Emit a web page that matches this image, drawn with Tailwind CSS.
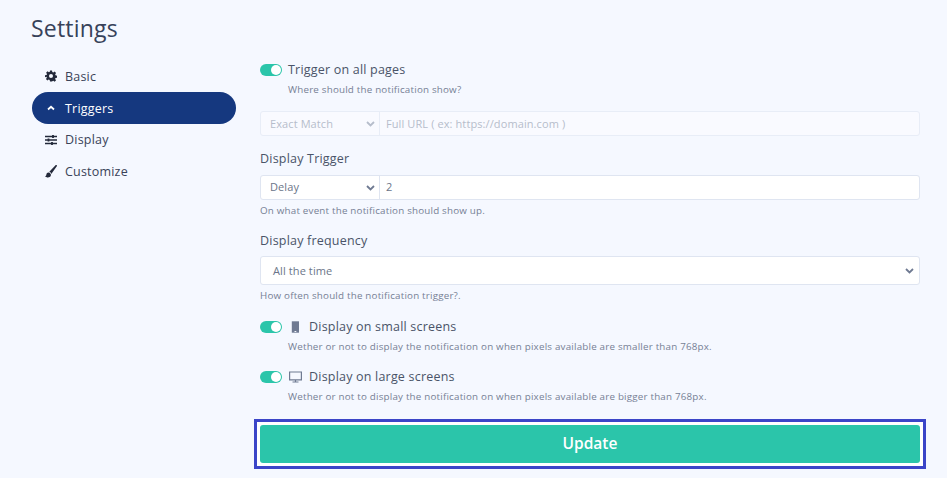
<!DOCTYPE html>
<html lang="en">
<head>
  <meta charset="UTF-8" />
  <title>Settings</title>
  <script src="https://cdn.jsdelivr.net/npm/@tailwindcss/browser@4"></script>
</head>
<body class="bg-[#f5f8ff] text-[#3a4358] font-['Open_Sans',sans-serif] h-[478px] w-[947px] overflow-hidden">
  <div class="pl-[31px] pt-[13px]">
    <h1 class="text-[23px] leading-[30px] font-normal text-[#37425a] tracking-[0.2px]">Settings</h1>
  </div>
  <div class="flex mt-[18px] pl-[32px]">
    <!-- sidebar -->
    <nav class="w-[204px] text-[12.500px] tracking-[0.2px] text-[#3a4358]">
      <a class="flex items-center h-[32px] pl-[13px] gap-[8px] mt-[-1px]">
        <svg class="w-[12px] h-[12px]" viewBox="0 0 24 24" fill="#23293a"><path fill-rule="evenodd" d="M10 1h4l.6 3.2 2 .8 2.7-1.8 2.8 2.8-1.8 2.7.8 2 3.1.6v4l-3.2.6-.8 2 1.900 2.700-2.800 2.800-2.700-1.800-2 .8L14 23h-4l-.6-3.2-2-.8-2.700 1.800-2.800-2.800 1.800-2.700-.8-2L0 14.700v-4l3.200-.6.8-2-1.800-2.700 2.800-2.800 2.700 1.800 2-.8zM12 8a4 4 0 1 0 0 8 4 4 0 0 0 0-8z"/></svg>
        <span class="pt-[2px]">Basic</span>
      </a>
      <a class="flex items-center h-[32px] pl-[15px] gap-[10px] rounded-full bg-[#15387f] text-white">
        <svg class="w-[8px] h-[6px]" viewBox="0 0 8 6" fill="none" stroke="#fff" stroke-width="1.800"><path d="M1 4.500 4 1.800 7 4.500"/></svg>
        <span class="pt-[2px]">Triggers</span>
      </a>
      <a class="flex items-center h-[32px] pl-[13px] gap-[8px]">
        <svg class="w-[12px] h-[12px]" viewBox="0 0 12 12" fill="none" stroke="#23293a" stroke-width="1.300"><path d="M0 2.500h12M0 6h12M0 9.500h12"/><path d="M8 1v3M3.500 4.500v3M7 8v3" stroke-width="1.800"/></svg>
        <span>Display</span>
      </a>
      <a class="flex items-center h-[31px] pl-[13px] gap-[8px]">
        <svg class="w-[12px] h-[13px]" viewBox="0 0 12 13" fill="#23293a"><path d="M11.800.3c-.5-.4-1.100-.3-1.500.1L4.300 6.800c1 .3 1.800 1.100 2 2.100l5.300-7.300c.4-.4.500-1 .2-1.300zM3.500 7.400C2.300 7.400 1.500 8.300 1.400 9.400 1.300 10.400.8 10.900 0 11.100c1.100 1.500 3.300 1.900 4.700 1 1.200-.8 1.500-2.100 1-3.200-.4-.9-1.200-1.500-2.200-1.500z"/></svg>
        <span class="pt-[2px]">Customize</span>
      </a>
    </nav>

    <!-- form -->
    <div class="ml-[24px] w-[660px] text-[12.500px] tracking-[0.2px]">
      <div class="flex items-center h-[20px] mt-[-1px]">
        <span class="relative w-[22px] h-[12px] rounded-full bg-[#2bc5aa] mr-[6px]"><span class="absolute right-[1px] top-[1px] w-[10px] h-[10px] rounded-full bg-white"></span></span>
        <span class="text-[#4a5468]">Trigger on all pages</span>
      </div>
      <p class="ml-[28px] mt-[3px] text-[9.800px] leading-[14px] text-[#757f95]">Where should the notification show?</p>

      <div class="flex h-[25px] mt-[14px] bg-[#f9faff] border border-[#e8edf7] rounded-[3px] text-[11px] tracking-[0.1px] text-[#b6bdcb]">
        <div class="w-[119px] flex items-center justify-between pl-[9px] pr-[4px] border-r border-[#e8edf7]">
          <span class="pt-[2px]">Exact Match</span>
          <svg class="w-[9px] h-[6px]" viewBox="0 0 9 6" fill="none" stroke="#b6bdcb" stroke-width="1.800"><path d="M1 1l3.500 3.500L8 1"/></svg>
        </div>
        <div class="flex items-center pl-[6px] pt-[2px]">Full URL ( ex: https://domain.com )</div>
      </div>

      <p class="mt-[14px] text-[12.500px] leading-[18px] text-[#4a5468]">Display Trigger</p>
      <div class="flex h-[25px] mt-[7px] bg-white border border-[#dfe5f1] rounded-[3px] text-[11px] tracking-[0.1px] text-[#6b7589]">
        <div class="w-[119px] flex items-center justify-between pl-[9px] pr-[4px] border-r border-[#dfe5f1]">
          <span>Delay</span>
          <svg class="w-[9px] h-[6px]" viewBox="0 0 9 6" fill="none" stroke="#6f7a92" stroke-width="1.800"><path d="M1 1l3.500 3.500L8 1"/></svg>
        </div>
        <div class="flex items-center pl-[6px]">2</div>
      </div>
      <p class="mt-[4px] text-[9.800px] leading-[14px] text-[#757f95]">On what event the notification should show up.</p>

      <p class="mt-[14px] text-[12.500px] leading-[18px] text-[#4a5468]">Display frequency</p>
      <div class="flex items-center justify-between h-[29px] mt-[6px] pl-[12px] pr-[5px] bg-white border border-[#dfe5f1] rounded-[3px] text-[11px] tracking-[0.1px] text-[#6b7589]">
        <span class="pt-[2px]">All the time</span>
        <svg class="w-[9px] h-[6px]" viewBox="0 0 9 6" fill="none" stroke="#6f7a92" stroke-width="1.800"><path d="M1 1l3.500 3.500L8 1"/></svg>
      </div>
      <p class="mt-[4px] text-[9.800px] leading-[14px] text-[#757f95]">How often should the notification trigger?.</p>

      <div class="flex items-center h-[20px] mt-[14px]">
        <span class="relative w-[22px] h-[12px] rounded-full bg-[#2bc5aa] mr-[7px]"><span class="absolute right-[1px] top-[1px] w-[10px] h-[10px] rounded-full bg-white"></span></span>
        <svg class="w-[13px] h-[12px] mr-[7px]" viewBox="0 0 13 12" fill="#6f7a92"><path d="M2.800.3h7.200v11.400H2.800z"/><path d="M5.500 10h1.800v1H5.500z" fill="#f5f8ff"/></svg>
        <span class="text-[12.500px] text-[#4a5468]">Display on small screens</span>
      </div>
      <p class="ml-[28px] mt-[3px] text-[9.800px] leading-[14px] text-[#757f95]">Wether or not to display the notification on when pixels available are smaller than 768px.</p>

      <div class="flex items-center h-[20px] mt-[13px]">
        <span class="relative w-[22px] h-[12px] rounded-full bg-[#2bc5aa] mr-[7px]"><span class="absolute right-[1px] top-[1px] w-[10px] h-[10px] rounded-full bg-white"></span></span>
        <svg class="w-[13px] h-[12px] mr-[7px]" viewBox="0 0 13 12" fill="none" stroke="#6f7a92" stroke-width="1.200"><path d="M.6 1h11.800v7.800H.6z"/><path d="M3.500 11h6M6.500 9v2"/></svg>
        <span class="text-[12.500px] text-[#4a5468]">Display on large screens</span>
      </div>
      <p class="ml-[28px] mt-[3px] text-[9.800px] leading-[14px] text-[#757f95]">Wether or not to display the notification on when pixels available are bigger than 768px.</p>

      <div class="mt-[15px] -mx-[6px] border-[3px] border-[#3b45c8] bg-white p-[3px]">
        <button class="w-full h-[38px] rounded-[3px] bg-[#2bc5aa] text-white text-[15.500px] tracking-normal font-semibold">Update</button>
      </div>
    </div>
  </div>
</body>
</html>
